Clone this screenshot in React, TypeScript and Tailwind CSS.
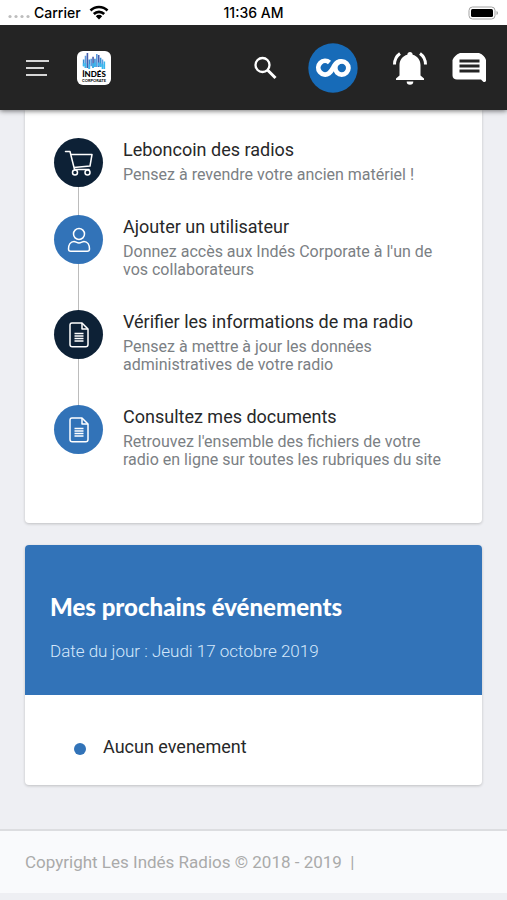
import type { ReactNode } from "react";

type Task = { title: string; text: string; icon: ReactNode; dark: boolean };

const cart = (
  <svg width="30" height="28" viewBox="0 0 30 28" fill="none" stroke="white" strokeWidth="1.5" strokeLinecap="round" strokeLinejoin="round">
    <path d="M1.500 2.500h4.500l4.500 18M7 5.500h21l-2 11.500-16 1.500M10.500 20.500H25" />
    <circle cx="11" cy="23.500" r="2.500" />
    <circle cx="23.500" cy="23.500" r="2.500" />
  </svg>
);

const person = (
  <svg width="24" height="28" viewBox="0 0 24 28" fill="none" stroke="white" strokeWidth="1.500" strokeLinejoin="round">
    <circle cx="12" cy="8" r="5.500" />
    <path d="M7 15.500c1.500 0 3 1.500 5 1.500s3.500-1.500 5-1.500c3.500 0 5.500 3.500 5.500 7.500 0 1.500-.8 2.300-2.300 2.300H3.800c-1.500 0-2.300-.8-2.300-2.300 0-4 2-7.500 5.500-7.500Z" />
  </svg>
);

const doc = (
  <svg width="20" height="26" viewBox="0 0 20 26" fill="none" stroke="white" strokeWidth="1.500" strokeLinejoin="round">
    <path d="M3 1h10l6 6v15.500c0 1.500-.8 2.300-2.300 2.300H3.300C1.800 24.800 1 24 1 22.500V3.200C1 1.800 1.800 1 3 1Z" />
    <path d="M13 1v6h6M5.500 11.500h9M5.500 14h9M5.500 16.500h9M5.500 19h9" />
  </svg>
);

const tasks: Task[] = [
  { title: "Leboncoin des radios", text: "Pensez à revendre votre ancien matériel !", icon: cart, dark: true },
  { title: "Ajouter un utilisateur", text: "Donnez accès aux Indés Corporate à l'un de vos collaborateurs", icon: person, dark: false },
  { title: "Vérifier les informations de ma radio", text: "Pensez à mettre à jour les données administratives de votre radio", icon: doc, dark: true },
  { title: "Consultez mes documents", text: "Retrouvez l'ensemble des fichiers de votre radio en ligne sur toutes les rubriques du site", icon: doc, dark: false },
];

function StatusBar() {
  return (
    <div className="grid h-[25px] grid-cols-3 items-center bg-white px-2 font-[Inter,sans-serif] text-sm font-medium text-black">
      <div className="flex items-center gap-1">
        <svg width="22" height="14" viewBox="0 0 22 14" fill="#bdbdbd">
          <circle cx="2" cy="10.500" r="1.600" />
          <circle cx="8" cy="10.500" r="1.600" />
          <circle cx="14" cy="10.500" r="1.600" />
          <circle cx="20" cy="10.500" r="1.600" />
        </svg>
        <span>Carrier</span>
        <svg className="ml-1" width="20" height="15" viewBox="0 0 20 15" fill="none" stroke="black" strokeWidth="2.600">
          <path d="M1.500 5.500a12 12 0 0 1 17 0M4.800 9a7.400 7.400 0 0 1 10.400 0" />
          <path d="M10 14.500 6.800 11.200a4.500 4.500 0 0 1 6.400 0Z" fill="black" stroke="none" />
        </svg>
      </div>
      <span className="text-center">11:36 AM</span>
      <svg className="justify-self-end" width="31" height="14" viewBox="0 0 31 14">
        <rect x="1" y="1" width="26" height="12" rx="3.500" fill="white" stroke="#a3a3a3" />
        <rect x="3" y="3" width="22" height="8" rx="1.500" />
        <path d="M28.500 5v4c2-.8 2-3.200 0-4Z" fill="#a3a3a3" />
      </svg>
    </div>
  );
}

function AppLogo() {
  return (
    <a href="#" className="ml-[27px] flex size-[34px] flex-col items-center overflow-hidden rounded-md bg-white pt-[2px]">
      <svg width="24" height="16" viewBox="0 0 24 17" strokeWidth="1.700" fill="none">
        <path d="M1 7v7M7 7v10M13 6v9M19 5v9" stroke="#348fd3" />
        <path d="M3 3v13M9 6v8M15 1v14M21 7v8" stroke="#5b9bdf" />
        <path d="M5 0v16M11 4v12M17 2v13" stroke="#445dab" />
        <path d="M1 11v3M3 11v5M7 12v5M11 11v5M13 10v5M17 10v4M19 11v4M21 12v5M23 9v8" stroke="#39b7ee" />
      </svg>
      <span className="font-[Lato,sans-serif] text-[8px] leading-[10px] font-black text-black">İNDÉS</span>
      <span className="font-[Lato,sans-serif] text-[4px] leading-[4px] font-bold text-black">CORPORATE</span>
    </a>
  );
}

function Header() {
  return (
    <header className="sticky top-0 z-10 shadow-[0_1px_5px_rgba(0,0,0,0.55)]">
      <StatusBar />
      <nav className="flex h-[85px] items-center bg-[#242424] pr-5 pl-[26px]">
        <button aria-label="Menu">
          <svg width="24" height="20" viewBox="0 0 24 20" stroke="#d6d6d6" strokeWidth="1.800">
            <path d="M0 3h23M0 10h18M0 17h21" />
          </svg>
        </button>
        <AppLogo />
        <div className="ml-auto flex items-center">
          <button aria-label="Rechercher" className="mr-[31px]">
            <svg width="24" height="24" viewBox="0 0 24 24" fill="none" stroke="white" strokeWidth="2.300">
              <circle cx="9.500" cy="9" r="7" />
              <path d="m14.500 14 8 8" strokeWidth="3" />
            </svg>
          </button>
          <a href="#" aria-label="Corporate" className="mr-[34px]">
            <svg width="50" height="50" viewBox="0 0 50 50" fill="none" stroke="white" strokeWidth="4.800">
              <circle cx="25" cy="25" r="24.700" fill="#176bb8" stroke="none" />
              <path d="M21.500 19.500A6.800 6.800 0 1 0 21 30.300C23.500 28.500 24.500 26 26.500 22.500C28 19.800 30.500 18.300 33.500 18.300" />
              <circle cx="33.800" cy="25" r="6.600" />
            </svg>
          </a>
          <button aria-label="Notifications" className="mr-6">
            <svg width="36" height="36" viewBox="0 0 36 36" fill="white">
              <path d="M18 2c1.600 0 2.500 1 2.700 2.700C25.500 6 28.500 10 28.500 15v10.500l3.500 3v1.500H4v-1.500l3.500-3V15c0-5 3-9 7.800-10.300C15.500 3 16.400 2 18 2Z" />
              <path d="M14.700 31.500h6.600a3.300 3.300 0 0 1-6.600 0Z" />
              <path d="M2.500 14.500C2.500 10 4.500 6 8 3.500M33.500 14.500c0-4.500-2-8.500-5.500-11" fill="none" stroke="white" strokeWidth="3" />
            </svg>
          </button>
          <button aria-label="Messages">
            <svg width="35" height="32" viewBox="0 0 35 32" fill="white">
              <path d="M8 1h19c4 1.500 6 4 7 7v20.500c0 1.500-2 2-3 1L29 27.500H5c-2.500 0-4.500-1.500-4.500-4V8C2 5 4 2.500 8 1Z" />
              <path d="M7.500 9h20M7.500 14h20M7.500 19h20" stroke="#242424" strokeWidth="3" />
            </svg>
          </button>
        </div>
      </nav>
    </header>
  );
}

function TaskItem({ task, last }: { task: Task; last: boolean }) {
  return (
    <li className="flex gap-5">
      <div className="flex w-[49px] shrink-0 flex-col items-center">
        <div className={`flex size-[49px] items-center justify-center rounded-full ${task.dark ? "bg-[#0d2136]" : "bg-[#3273b8]"}`}>
          {task.icon}
        </div>
        {!last && <div className="w-px flex-1 bg-[#bcbcbc]" />}
      </div>
      <div className="pb-[31px]">
        <h3 className="text-lg leading-6 text-[#272829]">{task.title}</h3>
        <p className="mt-1 text-base leading-[18px] text-[#7b8084]">{task.text}</p>
      </div>
    </li>
  );
}

export default function App() {
  return (
    <div className="min-h-screen bg-[#eeeff3] font-[Roboto,sans-serif]">
      <Header />
      <main className="flex flex-col gap-[22px] px-[25px] pb-11">
        <section className="rounded-b-sm bg-white pt-7 pr-9 pb-[23px] pl-[29px] shadow-[0_1px_3px_rgba(0,0,0,0.2)]">
          <ul>
            {tasks.map((task, i) => (
              <TaskItem key={task.title} task={task} last={i === tasks.length - 1} />
            ))}
          </ul>
        </section>
        <section className="overflow-hidden rounded-sm bg-white shadow-[0_1px_3px_rgba(0,0,0,0.2)]">
          <div className="bg-[#3273b8] px-[25px] pt-12 pb-8">
            <h2 className="font-[Lato,sans-serif] text-2xl leading-7 font-black text-white">Mes prochains événements</h2>
            <p className="mt-[18px] text-[17px] leading-6 font-light text-[#d5e8fb]">Date du jour : Jeudi 17 octobre 2019</p>
          </div>
          <ul className="px-[49px] pt-10 pb-[26px]">
            <li className="flex items-center gap-[17px] text-lg leading-6 text-[#272829]">
              <span className="mt-1 size-3 rounded-full bg-[#3273b8]" />
              Aucun evenement
            </li>
          </ul>
        </section>
      </main>
      <footer className="border-t-2 border-[#dcdde0] bg-[#f9fafc] px-[25px] py-[19px] text-[17px] leading-6 text-[#aaaaaa]">
        Copyright Les Indés Radios © 2018 - 2019 &nbsp;|
      </footer>
    </div>
  );
}
